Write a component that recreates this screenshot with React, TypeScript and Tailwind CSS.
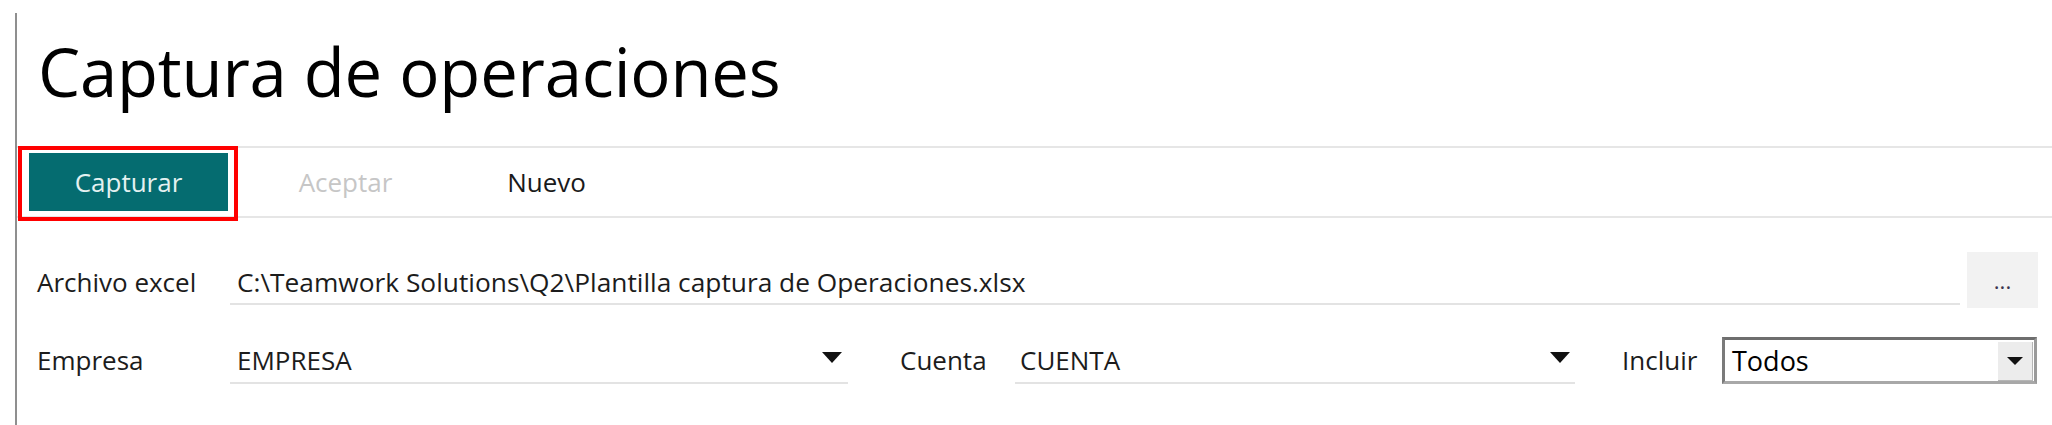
export default function App() {
  return (
    <div className="w-full h-[425px] bg-white pt-[13px] font-['Open_Sans',sans-serif] text-[#1c1c1c]">
      <div className="ml-[15px] h-full border-l-2 border-[#8f8f8f]">
        {/* TITLE */}
        <div className="h-[133px] pl-[21px] pt-[24px]">
          <h1 className="text-[67px] leading-[68px] tracking-[-0.2px] text-black">Captura de operaciones</h1>
        </div>

        {/* TOOLBAR */}
        <div className="h-[72px] border-y-2 border-[#e6e6e6] flex items-center pl-[12px]">
          <div className="relative">
            <button className="w-[199px] h-[58px] bg-[#056c70] text-[#e4f1f1] text-[26px] leading-[34px]">
              Capturar
            </button>
            <div className="absolute left-[-11px] top-[-7px] w-[220px] h-[75px] border-4 border-[#ff0000]" />
          </div>
          <button className="ml-[18px] w-[199px] h-[58px] text-[#c6c6c6] text-[26px] leading-[34px]">
            Aceptar
          </button>
          <button className="ml-[2px] w-[199px] h-[58px] text-[#1a1a1a] text-[26px] leading-[34px]">
            Nuevo
          </button>
        </div>

        {/* FORM */}
        <div className="pt-[34px] text-[26px] leading-[34px]">
          <div className="flex h-[56px]">
            <div className="w-[213px] pl-[20px] pt-[13px]">Archivo excel</div>
            <div className="flex-1 h-[53px] border-b-2 border-[#e3e3e3] pl-[7px] pt-[13px] whitespace-nowrap text-[26.3px]">
              C:\Teamwork Solutions\Q2\Plantilla captura de Operaciones.xlsx
            </div>
            <button className="ml-[7px] mr-[14px] w-[71px] h-[56px] bg-[#f2f2f2] text-[22px] leading-[30px] text-[#3b3450]">
              ...
            </button>
          </div>

          <div className="flex h-[47px] mt-[29px]">
            <div className="w-[213px] pl-[20px] pt-[6px]">Empresa</div>
            <div className="w-[618px] h-[47px] border-b-2 border-[#e3e3e3] flex justify-between pl-[7px] pr-[6px]">
              <span className="pt-[6px]">EMPRESA</span>
              <svg width="20" height="11" viewBox="0 0 20 11" className="mt-[15px]">
                <path d="M0 0 H20 L10 11 Z" fill="#111" />
              </svg>
            </div>

            <div className="ml-[52px] w-[115px] pt-[6px]">Cuenta</div>
            <div className="w-[560px] h-[47px] border-b-2 border-[#e3e3e3] flex justify-between pl-[5px] pr-[5px]">
              <span className="pt-[6px]">CUENTA</span>
              <svg width="20" height="11" viewBox="0 0 20 11" className="mt-[15px]">
                <path d="M0 0 H20 L10 11 Z" fill="#111" />
              </svg>
            </div>

            <div className="ml-[47px] w-[100px] pt-[6px]">Incluir</div>
            <div className="w-[315px] h-[47px] border-[3px] border-t-[#6e6e6e] border-l-[#7a7a7a] border-r-[#9a9a9a] border-b-[#a8a8a8] flex justify-between bg-white">
              <span className="pl-[7px] pt-[3px] text-[27px] leading-[36px] text-black">Todos</span>
              <div className="mt-[2px] mr-[1px] w-[35px] h-[39px] bg-[#ececec] border-r border-b border-[#b5b5b5] flex items-center justify-center">
                <svg width="16" height="8" viewBox="0 0 16 8">
                  <path d="M0 0 H16 L8 8 Z" fill="#111" />
                </svg>
              </div>
            </div>
          </div>
        </div>
      </div>
    </div>
  );
}
